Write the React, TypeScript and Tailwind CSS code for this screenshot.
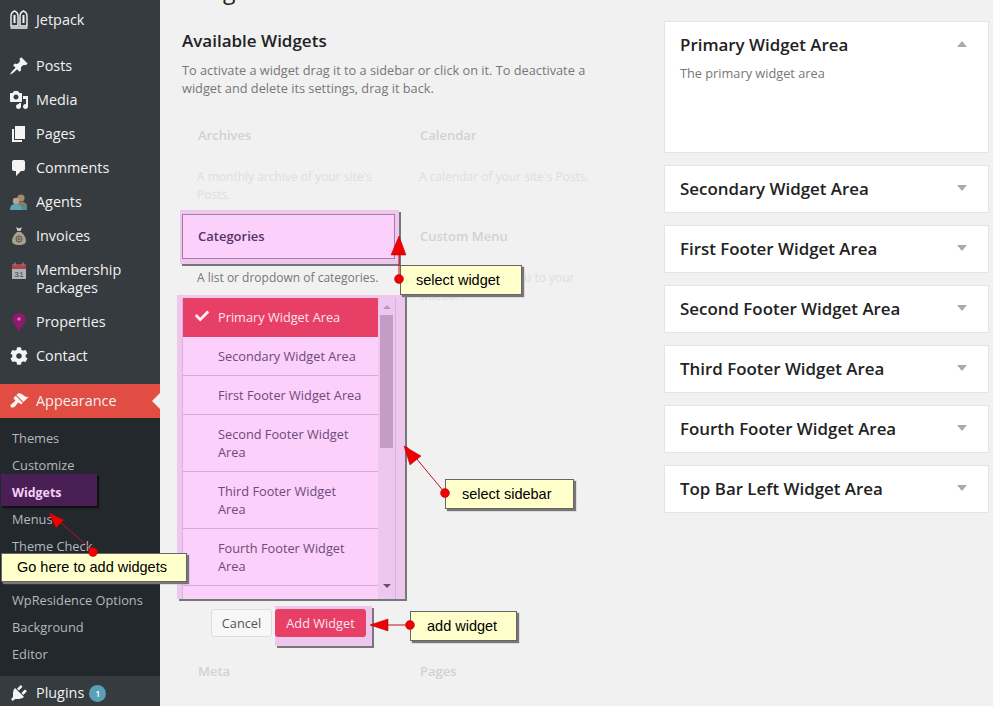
import { FaCheck, FaCog } from "react-icons/fa";

const OPEN = "font-['Open_Sans',sans-serif]";

const dash = {
  post: "M10.44 3.02l1.82-1.82 6.36 6.35-1.83 1.82c-1.05-.68-2.48-.57-3.41.36l-.75.75c-.92.93-1.04 2.35-.35 3.41l-1.83 1.82-2.41-2.41-2.8 2.79c-.42.42-3.38 2.71-3.8 2.29s1.86-3.39 2.28-3.81l2.79-2.79L4.1 9.36l1.83-1.82c1.05.69 2.48.57 3.41-.36l.75-.75c.93-.92 1.04-2.35.35-3.41z",
  media:
    "M13 11V4c0-.55-.45-1-1-1h-1.67L9 1H5L3.67 3H2c-.55 0-1 .45-1 1v7c0 .55.45 1 1 1h10c.55 0 1-.45 1-1zM7 4.5c1.38 0 2.5 1.12 2.5 2.5S8.38 9.5 7 9.5 4.5 8.38 4.5 7 5.62 4.5 7 4.5zM14 6h5v10.5c0 1.38-1.12 2.5-2.5 2.5S14 17.88 14 16.5s1.12-2.5 2.5-2.5c.17 0 .34.02.5.05V9h-3V6zm-4 8.05V13h2v3.5c0 1.38-1.12 2.5-2.5 2.5S7 17.88 7 16.5 8.12 14 9.5 14c.17 0 .34.02.5.05z",
  pages: "M6 15V2h10v13H6zm-1 1h8v2H3V5h2v11z",
  comments: "M5 2h9c1.1 0 2 .9 2 2v7c0 1.1-.9 2-2 2h-2l-5 5v-5H5c-1.1 0-2-.9-2-2V4c0-1.1.9-2 2-2z",
  brush:
    "M14.48 11.06L7.41 3.99l1.5-1.5c.5-.56 2.3-.47 3.51.32 1.21.8 1.43 1.28 2.91 2.1 1.18.64 2.45 1.26 4.45.85zm-.71.71L6.7 4.7 4.93 6.47c-.39.39-.39 1.02 0 1.41l1.06 1.06c.39.39.39 1.03 0 1.42-.6.6-1.43 1.11-2.21 1.69-.35.26-.7.53-1.01.84C1.43 13.23.99 15.1 2 16c.99 1.01 2.87.57 4.21-.77.31-.31.58-.66.84-1.01.58-.78 1.09-1.61 1.69-2.21.39-.39 1.03-.39 1.42 0l1.06 1.06c.39.39 1.02.39 1.41 0z",
  plug: "M13.11 4.36L9.87 7.6 8 5.73l3.24-3.24c.35-.34 1.05-.2 1.56.32.52.51.66 1.21.31 1.55zm-8 1.77l.91-1.12 9.01 9.01-1.19.84c-.71.71-2.63 1.16-3.82 1.16H6.14L4.9 17.26c-.59.59-1.54.59-2.12 0-.59-.58-.59-1.53 0-2.12l1.24-1.24v-3.88c0-1.13.4-3.19 1.09-3.89zm7.26 3.97l3.24-3.24c.34-.35 1.04-.21 1.55.31.52.51.66 1.21.31 1.55l-3.24 3.25z",
};

function Dash({ d }: { d: string }) {
  return (
    <svg viewBox="0 0 20 20" className="w-5 h-5" fill="#f4f4f4">
      <path d={d} />
    </svg>
  );
}

function JetpackIcon() {
  return (
    <svg viewBox="0 0 20 20" className="w-5 h-5">
      <path d="M2 6c0-2 1-4 3.500-5C8 2 9 4 9 6v10H2z" fill="none" stroke="#f4f4f4" strokeWidth="1.400" />
      <path d="M11 6c0-2 1-4 3.500-5C17 2 18 4 18 6v10h-7z" fill="none" stroke="#f4f4f4" strokeWidth="1.400" />
      <path d="M5.500 5v8M14.500 5v8" stroke="#f4f4f4" strokeWidth="2" />
      <path d="M1.500 18h17" stroke="#f4f4f4" strokeWidth="1.500" />
    </svg>
  );
}

function AgentsIcon() {
  return (
    <svg viewBox="0 0 20 20" className="w-5 h-5">
      <circle cx="12" cy="6" r="3.600" fill="#a08a70" />
      <path d="M7 14c0-3 2-4.500 5-4.500s6 1.500 6 4.500v2H7z" fill="#8c7a64" />
      <circle cx="7" cy="9" r="3.200" fill="#b5a58e" />
      <path d="M1 18c0-4 2-6 5.500-6S13 14 13 18z" fill="#5fa3b5" />
      <path d="M13 13c2 0 5 .5 5 3.500V18h-5z" fill="#4b8ea0" />
    </svg>
  );
}

function BagIcon() {
  return (
    <svg viewBox="0 0 20 20" className="w-5 h-5">
      <path d="M7 1l3 1.500L13 1l-1.500 4h-3z" fill="#d8d0c0" />
      <path d="M8 6h4c3 2.500 5 6 5 8.500 0 3-2 4.500-7 4.500s-7-1.500-7-4.500C3 12 5 8.500 8 6z" fill="#a89f8e" />
      <circle cx="10" cy="13" r="3" fill="none" stroke="#5b554a" strokeWidth="1" />
      <path d="M10 10v6M7.500 13h5" stroke="#5b554a" strokeWidth=".8" />
    </svg>
  );
}

function CalendarIcon() {
  return (
    <svg viewBox="0 0 20 20" className="w-5 h-5">
      <rect x="3" y="3" width="14" height="15" fill="#aeb4b5" />
      <rect x="3" y="3" width="14" height="5" fill="#a8474d" />
      <path d="M6 1.500v3M14 1.500v3" stroke="#8c8f90" strokeWidth="1.200" />
      <text x="10" y="16" textAnchor="middle" fontSize="8" fill="#3f4649" fontFamily="'Liberation Mono', monospace">
        31
      </text>
    </svg>
  );
}

function PinIcon() {
  return (
    <svg viewBox="0 0 20 20" className="w-5 h-5">
      <path d="M10 1c4 0 6.500 2.800 6.500 6.300C16.500 11 12.500 15 10 19.500 7.500 15 3.500 11 3.500 7.300 3.500 3.800 6 1 10 1z" fill="#8f1a6c" />
      <circle cx="10" cy="7" r="1.700" fill="#d870b8" />
    </svg>
  );
}

function MenuRow({ icon, label, active }: { icon: React.ReactNode; label: React.ReactNode; active?: boolean }) {
  return (
    <div className={`relative flex items-center h-[34px] ${active ? "bg-[#e14d43]" : ""}`}>
      <div className="w-9 shrink-0 flex justify-center pl-[1px]">{icon}</div>
      <div className="text-[14.4px] leading-[18px] text-[#f1f1f1]">{label}</div>
      {active && (
        <div className="absolute right-0 top-[9px] border-y-[8px] border-r-[8px] border-y-transparent border-r-[#f1f1f1]" />
      )}
    </div>
  );
}

function SubItem({ label }: { label?: string }) {
  return <div className="h-[27px] pl-3 text-[12.8px] leading-[27px] text-[#b4b9be]">{label}</div>;
}

function Sidebar() {
  return (
    <aside className={`w-40 shrink-0 h-[706px] overflow-hidden bg-[#363b3f] pt-[3px] ${OPEN}`}>
      <MenuRow icon={<JetpackIcon />} label="Jetpack" />
      <div className="h-3" />
      <MenuRow icon={<Dash d={dash.post} />} label="Posts" />
      <MenuRow icon={<Dash d={dash.media} />} label="Media" />
      <MenuRow icon={<Dash d={dash.pages} />} label="Pages" />
      <MenuRow icon={<Dash d={dash.comments} />} label="Comments" />
      <MenuRow icon={<AgentsIcon />} label="Agents" />
      <MenuRow icon={<BagIcon />} label="Invoices" />
      <div className="flex h-[52px] pt-[8px]">
        <div className="w-9 shrink-0 flex justify-center pl-[1px]">
          <CalendarIcon />
        </div>
        <div className="text-[14.4px] leading-[18px] text-[#f1f1f1]">
          Membership
          <br />
          Packages
        </div>
      </div>
      <MenuRow icon={<PinIcon />} label="Properties" />
      <MenuRow icon={<FaCog className="w-[18px] h-[18px] text-[#f4f4f4]" />} label="Contact" />
      <div className="h-[11px]" />
      <MenuRow icon={<Dash d={dash.brush} />} label="Appearance" active />
      <div className="bg-[#23282d] pt-[7px] pb-2">
        <SubItem label="Themes" />
        <SubItem label="Customize" />
        <div className="relative h-[27px]">
          <div className="absolute left-[1px] -top-[5px] w-[96px] h-[32px] bg-[#4a1f55] pl-[11px] text-[12.4px] leading-[37px] font-bold text-[#f7d0f7] shadow-[2px_2px_1px_#111]">
            Widgets
          </div>
        </div>
        <SubItem label="Menus" />
        <SubItem label="Theme Check" />
        <SubItem />
        <SubItem label="WpResidence Options" />
        <SubItem label="Background" />
        <SubItem label="Editor" />
      </div>
      <MenuRow
        icon={<Dash d={dash.plug} />}
        label={
          <span className="flex items-center gap-[5px]">
            Plugins
            <span className="w-[17px] h-[17px] rounded-full bg-[#5a9fb5] text-white text-[9px] leading-[17px] text-center font-semibold">
              1
            </span>
          </span>
        }
      />
    </aside>
  );
}

function GhostWidget({ title, desc }: { title: string; desc?: React.ReactNode }) {
  return (
    <div>
      <div className="h-[43px] border border-[#f3f3f3] px-[15px] text-[13px] leading-[41px] font-semibold text-[#d2d2d2]">
        {title}
      </div>
      {desc && <div className="mt-[11px] pl-[15px] text-[12px] leading-[18px] text-[#dedede]">{desc}</div>}
    </div>
  );
}

function ChooserRow({ children, selected }: { children: React.ReactNode; selected?: boolean }) {
  return (
    <div
      className={`relative pl-[35px] pr-2 py-[10px] text-[12.75px] leading-[18px] border-b ${
        selected ? "bg-[#e83f66] text-[#fde4f0] border-[#e83f66]" : "text-[#6e4a78] border-[#d9a9d9]"
      }`}
    >
      {selected && <FaCheck className="absolute left-[12px] top-[11px] w-[14px] h-[14px] text-[#fff0f8]" />}
      {children}
    </div>
  );
}

function Chooser() {
  return (
    <div className="-ml-[5px] w-[228px] h-[304px] bg-[#eec7ee] pl-[5px] pr-[9px] pt-[3px] shadow-[2px_2px_0_#777]">
      <div className="flex h-full border-x border-[#dcb0dc] bg-[#fbd0fb]">
        <div className="flex-1 min-w-0">
          <ChooserRow selected>Primary Widget Area</ChooserRow>
          <ChooserRow>Secondary Widget Area</ChooserRow>
          <ChooserRow>First Footer Widget Area</ChooserRow>
          <ChooserRow>
            Second Footer Widget
            <br />
            Area
          </ChooserRow>
          <ChooserRow>
            Third Footer Widget
            <br />
            Area
          </ChooserRow>
          <ChooserRow>
            Fourth Footer Widget
            <br />
            Area
          </ChooserRow>
        </div>
        <div className="w-[17px] shrink-0 bg-[#eec7ee] flex flex-col items-center">
          <div className="mt-[7px] border-x-[4px] border-b-[4px] border-x-transparent border-b-[#b89ab8]" />
          <div className="mt-[6px] w-[13px] h-[133px] bg-[#c49cc4]" />
          <div className="mt-auto mb-[11px] border-x-[4px] border-t-[4px] border-x-transparent border-t-[#6e4a78]" />
        </div>
      </div>
    </div>
  );
}

function WidgetList() {
  return (
    <div className="flex gap-[9px]">
      <div className="w-[213px] flex flex-col">
        <GhostWidget
          title="Archives"
          desc={
            <>
              A monthly archive of your site's
              <br />
              Posts.
            </>
          }
        />
        <div className="mt-[6px] -ml-[2px] w-[219px] h-[54px] bg-[#eec7ee] pl-[2px] pr-[4px] pt-[4px] shadow-[2px_2px_0_#777]">
          <div className="h-[45px] border border-[#a97aa9] bg-[#fbd0fb] px-[15px] text-[13px] leading-[43px] font-semibold text-[#553366]">
            Categories
          </div>
        </div>
        <div className="mt-[5px] pl-[15px] text-[12px] leading-[18px] text-[#777]">A list or dropdown of categories.</div>
        <div className="mt-[8px]">
          <Chooser />
        </div>
        <div className="mt-[7px] flex">
          <div className="ml-[29px] mt-[3px] h-[28px] w-[61px] rounded-[3px] border border-[#ddd] bg-[#f7f7f7] text-center text-[12.75px] leading-[26px] text-[#555]">
            Cancel
          </div>
          <div className="ml-[3px] w-[97px] h-[40px] bg-[#eec7ee] shadow-[2px_2px_0_#777] pt-[3px]">
            <div className="h-[28px] w-[91px] rounded-[3px] bg-[#e83f66] text-center text-[12.75px] leading-[28px] text-[#fde4f0]">
              Add Widget
            </div>
          </div>
        </div>
        <div className="mt-[4px]">
          <GhostWidget title="Meta" />
        </div>
      </div>
      <div className="w-[213px] flex flex-col">
        <GhostWidget title="Calendar" desc="A calendar of your site's Posts." />
        <div className="mt-[29px]">
          <GhostWidget
            title="Custom Menu"
            desc={
              <>
                Add a custom menu to your
                <br />
                sidebar.
              </>
            }
          />
        </div>
        <div className="mt-auto">
          <GhostWidget title="Pages" />
        </div>
      </div>
    </div>
  );
}

function AreaCard({ title, arrow = "down", desc }: { title: string; arrow?: "up" | "down"; desc?: string }) {
  return (
    <div className={`relative bg-white border border-[#e5e5e5] px-[15px] ${desc ? "h-[132px]" : "h-[48px]"}`}>
      <div className="pt-[12px] text-[16.9px] leading-[22px] font-semibold text-[#222]">{title}</div>
      {desc && <div className="mt-[8px] text-[12.75px] leading-[18px] text-[#777]">{desc}</div>}
      <div
        className={`absolute right-[21px] top-[19px] border-x-[5px] border-x-transparent ${
          arrow === "up" ? "border-b-[6px] border-b-[#aaa]" : "border-t-[6px] border-t-[#aaa]"
        }`}
      />
    </div>
  );
}

function Callout({ className, children }: { className: string; children: React.ReactNode }) {
  return (
    <div
      className={`absolute z-20 bg-[#ffffcc] border border-[#666] shadow-[2px_2px_1px_#777] font-['Liberation_Sans',sans-serif] text-[14.5px] text-black ${className}`}
    >
      {children}
    </div>
  );
}

function Arrows() {
  return (
    <svg className="absolute left-0 top-0 z-30 pointer-events-none" width="993" height="706">
      <g stroke="#c01020" strokeWidth="1" fill="none">
        <path d="M399 279V240" />
        <path d="M445 493L406 446" />
        <path d="M410 625H371" />
        <path d="M93 551L50 513" />
      </g>
      <g fill="#f00000" stroke="#a00010" strokeWidth=".5">
        <path d="M399 236l7 19h-15z" />
        <path d="M404 446l17 10-11 9z" />
        <path d="M370 625l18-6v12z" />
        <path d="M49 513l15 7-8 8z" />
      </g>
      <g fill="#f00000" stroke="#b00010" strokeWidth=".5">
        <circle cx="399" cy="279" r="4.500" />
        <circle cx="445" cy="493" r="4.500" />
        <circle cx="410" cy="625" r="4.500" />
        <circle cx="93" cy="552" r="4.500" />
      </g>
    </svg>
  );
}

export default function App() {
  return (
    <div className={`relative w-[993px] h-[706px] overflow-hidden flex bg-[#f1f1f1] ${OPEN}`}>
      <Sidebar />
      <main className="flex-1 flex pl-[22px] pr-[4px]">
        <section className="w-[436px]">
          <h1 className="-mt-[24px] h-[28px] text-[23px] leading-[29px] text-[#222]">Widgets</h1>
          <h2 className="mt-[26px] text-[17px] leading-[22px] font-semibold text-[#222]">Available Widgets</h2>
          <p className="mt-[9px] text-[12.75px] leading-[18px] text-[#777]">
            To activate a widget drag it to a sidebar or click on it. To deactivate a
            <br />
            widget and delete its settings, drag it back.
          </p>
          <div className="mt-[17px]">
            <WidgetList />
          </div>
        </section>
        <section className="ml-[46px] flex-1 pt-[21px] flex flex-col gap-[12px]">
          <AreaCard title="Primary Widget Area" arrow="up" desc="The primary widget area" />
          <AreaCard title="Secondary Widget Area" />
          <AreaCard title="First Footer Widget Area" />
          <AreaCard title="Second Footer Widget Area" />
          <AreaCard title="Third Footer Widget Area" />
          <AreaCard title="Fourth Footer Widget Area" />
          <AreaCard title="Top Bar Left Widget Area" />
        </section>
      </main>
      <Callout className="left-[400px] top-[265px] w-[122px] h-[30px] pl-[15px] leading-[29px]">select widget</Callout>
      <Callout className="left-[445px] top-[479px] w-[129px] h-[30px] pl-[16px] leading-[28px]">select sidebar</Callout>
      <Callout className="left-[410px] top-[611px] w-[107px] h-[30px] pl-[16px] leading-[28px]">add widget</Callout>
      <Callout className="left-[1px] top-[553px] w-[186px] h-[29px] pl-[15px] leading-[27px]">Go here to add widgets</Callout>
      <Arrows />
    </div>
  );
}
